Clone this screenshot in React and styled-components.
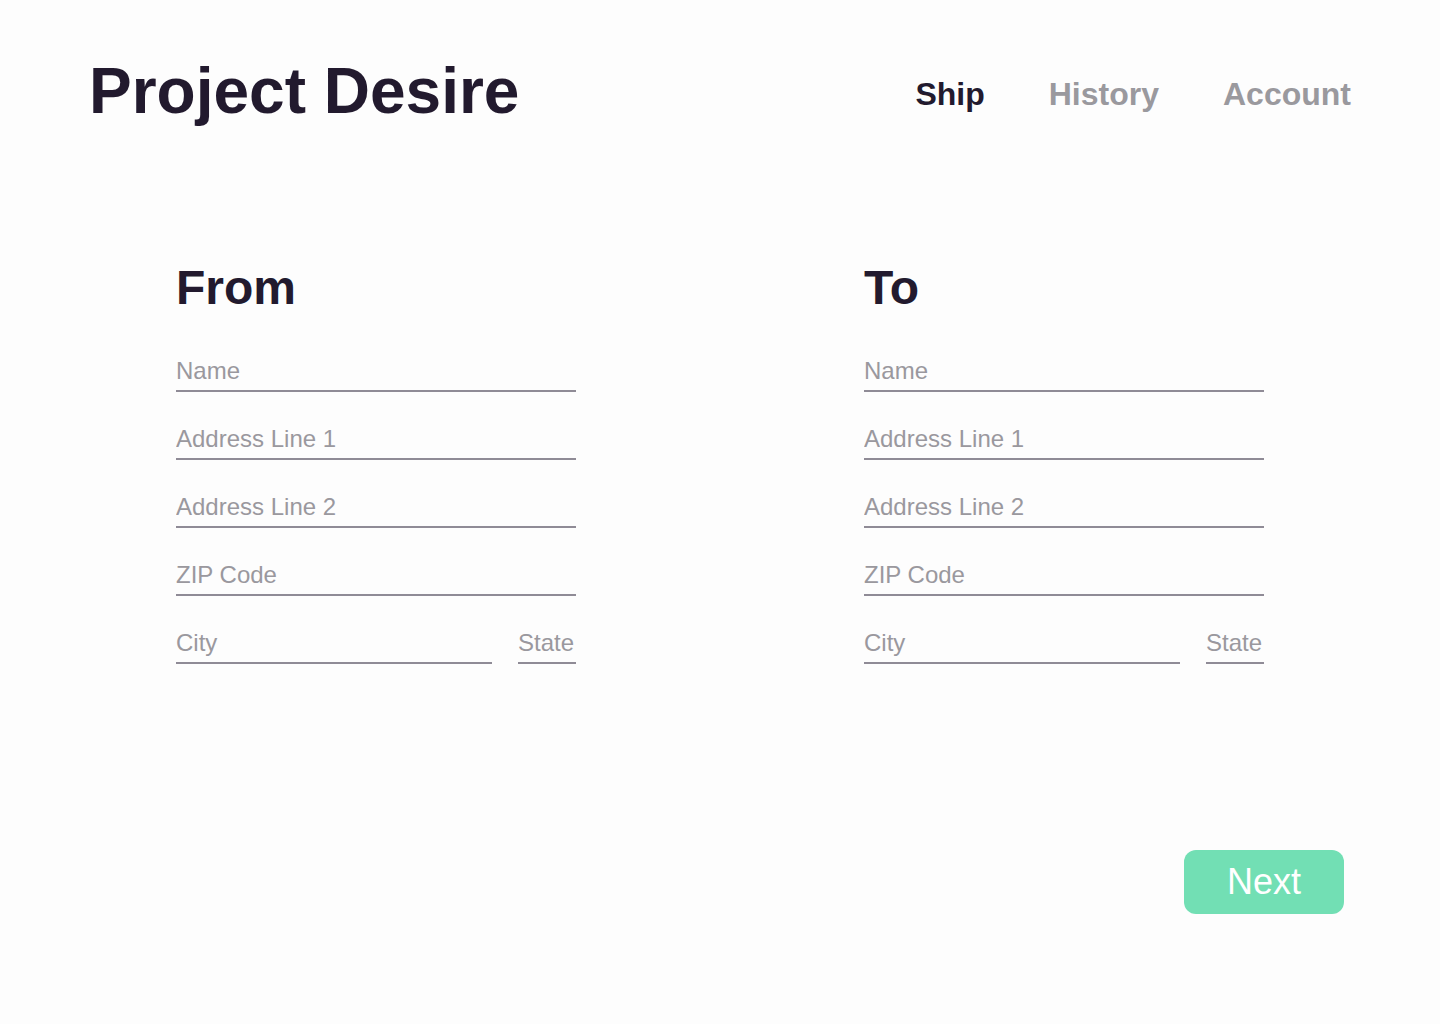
import React from 'react';
import styled, { createGlobalStyle } from 'styled-components';

const GlobalStyle = createGlobalStyle`
  body {
    margin: 0;
    background: #fdfdfd;
    font-family: "Liberation Sans", Arial, sans-serif;
  }
`;

const fields = ['Name', 'Address Line 1', 'Address Line 2', 'ZIP Code'];

function AddressForm({ title }) {
  return (
    <Column>
      <Heading>{title}</Heading>
      <Fields>
        {fields.map((f) => (
          <Field key={f} placeholder={f} />
        ))}
        <Row>
          <Field placeholder="City" $width="316px" />
          <Field placeholder="State" $width="58px" />
        </Row>
      </Fields>
    </Column>
  );
}

export default function App() {
  return (
    <Page>
      <GlobalStyle />
      <Header>
        <Title>Project Desire</Title>
        <Nav>
          <NavItem $active>Ship</NavItem>
          <NavItem>History</NavItem>
          <NavItem>Account</NavItem>
        </Nav>
      </Header>
      <Forms>
        <AddressForm title="From" />
        <AddressForm title="To" />
      </Forms>
      <Footer>
        <NextButton>Next</NextButton>
      </Footer>
    </Page>
  );
}

const Page = styled.div`
  width: 1440px;
  min-height: 1024px;
  color: #221a2e;
`;

const Header = styled.header`
  display: flex;
  justify-content: space-between;
  align-items: flex-start;
  padding: 59px 89px 0 89px;
`;

const Title = styled.h1`
  margin: 0;
  font-size: 64px;
  line-height: 1;
  font-weight: 700;
  color: #221a2e;
`;

const Nav = styled.nav`
  display: flex;
  gap: 64px;
  margin-top: 19px;
`;

const NavItem = styled.a`
  font-size: 32px;
  line-height: 1;
  font-weight: 700;
  color: ${(p) => (p.$active ? '#221a2e' : '#9a999e')};
  cursor: pointer;
`;

const Forms = styled.main`
  display: grid;
  grid-template-columns: 400px 400px;
  column-gap: 288px;
  padding: 141px 0 0 176px;
`;

const Column = styled.section`
  display: flex;
  flex-direction: column;
`;

const Heading = styled.h2`
  margin: 0 0 47px;
  font-size: 48px;
  line-height: 1;
  font-weight: 700;
  color: #221a2e;
`;

const Fields = styled.div`
  display: flex;
  flex-direction: column;
  gap: 35px;
`;

const Row = styled.div`
  display: flex;
  justify-content: space-between;
`;

const Field = styled.input`
  width: ${(p) => p.$width || '400px'};
  height: 24px;
  padding: 0 0 7px;
  margin: 0;
  box-sizing: content-box;
  border: none;
  border-bottom: 2px solid #8f8b96;
  background: transparent;
  font-family: "Liberation Sans", Arial, sans-serif;
  font-size: 24px;
  line-height: 24px;
  color: #221a2e;
  outline: none;

  &::placeholder {
    color: #9a989e;
  }
`;

const Footer = styled.div`
  display: flex;
  justify-content: flex-end;
  padding: 186px 96px 0 0;
`;

const NextButton = styled.button`
  width: 160px;
  height: 64px;
  border: none;
  border-radius: 12px;
  background: #72dfb4;
  color: #ffffff;
  font-family: "Liberation Sans", Arial, sans-serif;
  font-size: 36px;
  cursor: pointer;
`;
